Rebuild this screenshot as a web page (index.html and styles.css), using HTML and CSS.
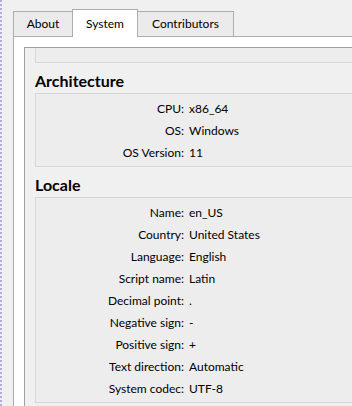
FILE: index.html
```html
<!doctype html>

<html>
	<head>
		<title>About - System</title>
		<meta charset="utf-8" />
		<link rel="stylesheet" href="styles.css">
	</head>

	<body>
		<div class="window">
			<div class="edge"></div>
			<div class="tabwidget">
				<div class="tabbar">
					<div class="tab about">About</div>
					<div class="tab system active">System</div>
					<div class="tab contrib">Contributors</div>
				</div>
				<div class="pane">
					<div class="scroll">
						<div class="content">
							<div class="group clipped">
								<div class="row"><span class="label">Kernel type:</span><span class="value">winnt</span></div>
							</div>

							<h2>Architecture</h2>
							<div class="group">
								<div class="row"><span class="label">CPU:</span><span class="value">x86_64</span></div>
								<div class="row"><span class="label">OS:</span><span class="value">Windows</span></div>
								<div class="row"><span class="label">OS Version:</span><span class="value">11</span></div>
							</div>

							<h2>Locale</h2>
							<div class="group">
								<div class="row"><span class="label">Name:</span><span class="value">en_US</span></div>
								<div class="row"><span class="label">Country:</span><span class="value">United States</span></div>
								<div class="row"><span class="label">Language:</span><span class="value">English</span></div>
								<div class="row"><span class="label">Script name:</span><span class="value">Latin</span></div>
								<div class="row"><span class="label">Decimal point:</span><span class="value">.</span></div>
								<div class="row"><span class="label">Negative sign:</span><span class="value">-</span></div>
								<div class="row"><span class="label">Positive sign:</span><span class="value">+</span></div>
								<div class="row"><span class="label">Text direction:</span><span class="value">Automatic</span></div>
								<div class="row"><span class="label">System codec:</span><span class="value">UTF-8</span></div>
							</div>
						</div>
					</div>
				</div>
			</div>
		</div>
	</body>
</html>
```

FILE: styles.css
```css
*{
	margin:0;
	padding:0;
	box-sizing:border-box;
}

html, body{
	width:352px;
	height:406px;
	overflow:hidden;
	background:#f0f0f0;
	font-family:Lato, "Noto Sans", sans-serif;
	font-size:12px;
	color:#000;
}

.window{
	display:flex;
	height:406px;
}

/* cut-off text of the window behind */
.edge{
	flex:none;
	width:13px;
	border-left:2px dotted #b4abdc;
}

.tabwidget{
	flex:none;
	width:460px;
	padding-top:9px;
	display:flex;
	flex-direction:column;
}

.tabbar{
	display:flex;
	align-items:flex-end;
	height:27px;
}

.tab{
	height:25px;
	line-height:24px;
	text-align:center;
	background:#ebebeb;
	border:1px solid #adadad;
	border-bottom:0;
}
.tab + .tab{ margin-left:-1px; }

.about{ width:60px; }
.system{ width:66px; }
.contrib{ width:97px; }

.tab.active{
	position:relative;
	z-index:1;
	height:28px;
	margin-bottom:-1px;
	padding-top:2px;
	background:#fff;
}

.pane{
	flex:1;
	background:#fff;
	border-top:1px solid #adadad;
	border-left:1px solid #adadad;
	padding:10px 0 0 10px;
}

.scroll{
	height:100%;
	overflow:hidden;
	background:#f0f0f0;
	border-top:1px solid #a0a0a0;
	border-left:1px solid #a0a0a0;
	padding-left:10px;
}

.group{
	width:400px;
	background:#ededed;
	border:1px solid #d7d7d7;
	padding:3px 0;
}

/* group scrolled above the visible area */
.group.clipped{
	margin-top:-22px;
	padding-bottom:10px;
}

h2{
	font-size:16px;
	font-weight:bold;
	line-height:24px;
	padding-top:6px;
}

.row{
	display:grid;
	grid-template-columns:148px 1fr;
	column-gap:5px;
	height:22px;
	padding-top:1px;
	line-height:21px;
	white-space:nowrap;
}

.label{
	text-align:right;
}
```
